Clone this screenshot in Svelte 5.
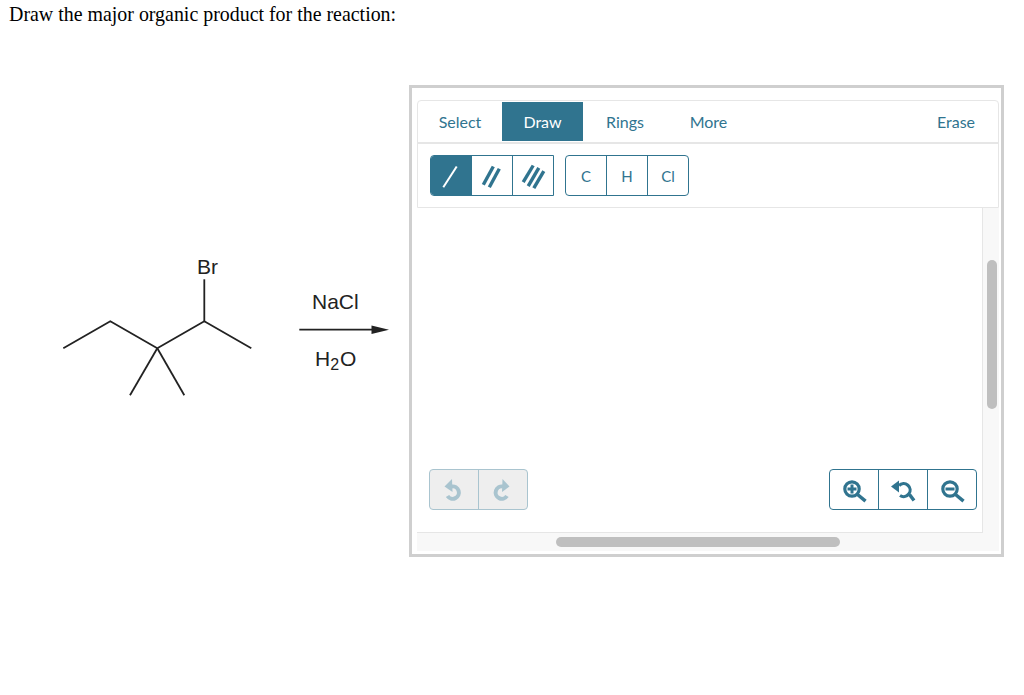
<script>
  const tabs = ["Select", "Draw", "Rings", "More"];
  const atoms = ["C", "H", "Cl"];
</script>

<main>
  <h1>Draw the major organic product for the reaction:</h1>

  <div class="problem">
    <svg class="reaction" viewBox="0 250 400 160" width="400" height="160">
      <g fill="none" stroke="#222" stroke-width="1.8">
        <polyline points="63.3,348.3 110.3,321.3 157.3,348.3 204.3,321.3 251.3,348.3" />
        <line x1="204.3" y1="321.3" x2="204.3" y2="279.3" />
        <line x1="157.3" y1="348.3" x2="130" y2="395.3" />
        <line x1="157.3" y1="348.3" x2="184.3" y2="395.3" />
        <line x1="299.3" y1="329.7" x2="375" y2="329.7" />
      </g>
      <polygon points="371.5,325.4 389,329.7 371.5,334" fill="#222" />
      <g class="chem">
        <text x="197" y="274">Br</text>
        <text x="312" y="309">NaCl</text>
        <text x="315" y="366">H<tspan class="sub" dy="4">2</tspan><tspan dy="-4" dx="1">O</tspan></text>
      </g>
    </svg>

    <section class="editor">
      <div class="toolbar">
        <nav class="tabs">
          {#each tabs as tab}
            <span class="tab {tab.toLowerCase()}" class:active={tab === "Draw"}>{tab}</span>
          {/each}
          <span class="tab erase">Erase</span>
        </nav>
        <div class="tools">
          <div class="group bonds">
            <button class="on" aria-label="Single bond">
              <svg viewBox="0 0 24 24" width="24" height="24"><line x1="4.300" y1="23.200" x2="17.700" y2="2.500" /></svg>
            </button>
            <button aria-label="Double bond">
              <svg viewBox="0 0 24 24" width="24" height="24"><line x1="3.300" y1="20.800" x2="13.300" y2="2.500" /><line x1="9.300" y1="23.200" x2="19.300" y2="4.800" /></svg>
            </button>
            <button aria-label="Triple bond">
              <svg viewBox="0 0 24 24" width="24" height="24"><line x1="2.200" y1="18.200" x2="12.200" y2="1.500" /><line x1="7.200" y1="22.200" x2="17.800" y2="3.800" /><line x1="12.800" y1="24.200" x2="22.800" y2="7.200" /></svg>
            </button>
          </div>
          <div class="group atoms">
            {#each atoms as atom}
              <button>{atom}</button>
            {/each}
          </div>
        </div>
      </div>

      <div class="workspace">
        <div class="canvas">
          <div class="group history">
            <button aria-label="Undo">
              <svg viewBox="0 0 20 20" width="20" height="20">
                <path class="arc" d="M7.500 6.500A6.200 6.200 0 1 1 3.500 16" />
                <polygon points="0.500,6.500 8,-1 8.500,12" />
              </svg>
            </button>
            <button aria-label="Redo">
              <svg viewBox="0 0 20 20" width="20" height="20">
                <path class="arc" d="M10 6.500A6.200 6.200 0 1 0 14 16" />
                <polygon points="16.500,6.500 9.500,-1 9,12" />
              </svg>
            </button>
          </div>
          <div class="group zoom">
            <button aria-label="Zoom in">
              <svg viewBox="0 0 24 24" width="24" height="24">
                <circle class="arc" cx="10" cy="11" r="7.200" />
                <line x1="15.500" y1="16.500" x2="23.500" y2="23.200" />
                <path class="sign" d="M5.500 11h9M10 6.500v9" />
              </svg>
            </button>
            <button aria-label="Reset zoom">
              <svg viewBox="0 0 24 24" width="24" height="24">
                <path class="arc" d="M8 7.500A6.500 6.500 0 1 1 9 17.500" />
                <polygon points="0,8.500 8,2.500 8,14.500" />
                <line x1="18.500" y1="16.500" x2="23" y2="22.500" />
              </svg>
            </button>
            <button aria-label="Zoom out">
              <svg viewBox="0 0 24 24" width="24" height="24">
                <circle class="arc" cx="10" cy="11" r="7.200" />
                <line x1="15.500" y1="16.500" x2="23.500" y2="23.200" />
                <path class="sign" d="M5.500 11h9" />
              </svg>
            </button>
          </div>
        </div>
        <div class="track vertical"><span class="thumb"></span></div>
        <div class="track horizontal"><span class="thumb"></span></div>
      </div>
    </section>
  </div>
</main>

<style>
  :global(body) {
    background: #fff;
  }

  main {
    width: 1024px;
    height: 695px;
    overflow: hidden;
  }

  h1 {
    margin: 0;
    padding: 3px 0 0 9px;
    height: 85px;
    box-sizing: border-box;
    font: 400 19.920px/22px "Liberation Serif", serif;
    color: #000;
  }

  .problem {
    display: flex;
    align-items: flex-start;
  }

  .reaction {
    flex: none;
    margin-top: 165px;
  }

  .chem text {
    font: 400 21px "Liberation Sans", sans-serif;
    fill: #222;
  }

  .chem .sub {
    font-size: 16px;
  }

  .editor {
    flex: none;
    margin-left: 9px;
    width: 595px;
    height: 472px;
    box-sizing: border-box;
    border: 3px solid #cfcfcf;
    padding: 12px 2px 3px 5px;
    display: flex;
    flex-direction: column;
    font-family: Lato, sans-serif;
    color: #30748f;
  }

  .toolbar {
    flex: none;
    height: 108px;
    box-sizing: border-box;
    border: 1px solid #e6e6e6;
    border-radius: 4px 4px 0 0;
  }

  .tabs {
    display: flex;
    align-items: flex-start;
    height: 43px;
    box-sizing: border-box;
    padding-top: 1px;
    border-bottom: 2px solid #e6e6e6;
  }

  .tab {
    height: 39px;
    line-height: 39px;
    font-size: 16px;
    text-align: center;
  }

  .select { width: 84px; }
  .draw { width: 81px; }
  .rings { width: 84px; }
  .more { width: 83px; }
  .erase { margin-left: auto; width: 84px; }

  .tab.active {
    background: #30748f;
    color: #fff;
  }

  .tools {
    display: flex;
    gap: 11px;
    padding: 11px 0 0 12px;
  }

  .group {
    display: flex;
    box-sizing: border-box;
    height: 41px;
    border: 1px solid #30748f;
    border-radius: 4px;
    overflow: hidden;
    background: #fff;
  }

  .group button {
    flex: 1;
    display: flex;
    align-items: center;
    justify-content: center;
    padding: 0;
    border: 0;
    border-left: 1px solid #30748f;
    background: transparent;
    color: inherit;
    font: inherit;
    font-size: 15px;
  }

  .group button:first-child {
    border-left: 0;
  }

  .group svg {
    overflow: visible;
  }

  .bonds, .atoms {
    width: 124px;
  }

  .bonds {
    border-radius: 4px 0 0 4px;
  }

  .bonds svg line {
    stroke: #30748f;
    stroke-width: 3.400;
  }

  .bonds .on {
    background: #30748f;
  }

  .bonds .on svg line {
    stroke: #fff;
    stroke-width: 2;
  }

  .workspace {
    flex: 1;
    display: grid;
    grid-template-columns: 1fr 16px;
    grid-template-rows: 1fr 18px;
    min-height: 0;
  }

  .canvas {
    display: flex;
    justify-content: space-between;
    align-items: flex-end;
    padding: 0 5px 22px 12px;
    border-right: 1px solid #e6e6e6;
    border-bottom: 1px solid #e6e6e6;
  }

  .history {
    width: 99px;
    background: #eee;
    border-color: #a9c4cf;
  }

  .history button {
    border-left-color: #a9c4cf;
  }

  .history svg .arc {
    fill: none;
    stroke: #a9c4cf;
    stroke-width: 4;
  }

  .history svg polygon {
    fill: #a9c4cf;
  }

  .zoom {
    width: 148px;
  }

  .zoom svg .arc {
    fill: none;
    stroke: #30748f;
    stroke-width: 3.200;
  }

  .zoom svg line {
    stroke: #30748f;
    stroke-width: 3.500;
  }

  .zoom svg .sign {
    fill: none;
    stroke: #30748f;
    stroke-width: 3;
  }

  .zoom svg polygon {
    fill: #30748f;
  }

  .track {
    background: #f8f8f8;
    display: flex;
  }

  .track.vertical {
    padding: 52px 0 0 4px;
  }

  .track.vertical .thumb {
    width: 10px;
    height: 149px;
    border-radius: 5px;
    background: #bfbfbf;
  }

  .track.horizontal {
    grid-column: 1 / -1;
    padding: 4px 0 0 139px;
  }

  .track.horizontal .thumb {
    width: 284px;
    height: 10px;
    border-radius: 5px;
    background: #bfbfbf;
  }
</style>
